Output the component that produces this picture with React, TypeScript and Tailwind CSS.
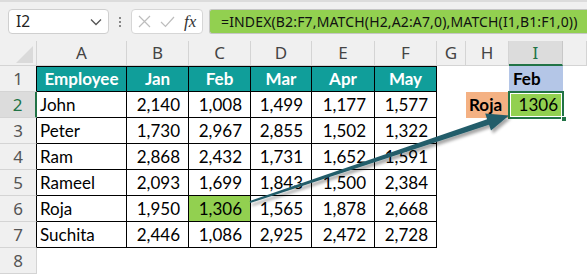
import React from "react";

const cellFont = { fontFamily: "Lato, 'Open Sans', sans-serif" };
const uiFont = { fontFamily: "'Noto Sans', 'Open Sans', sans-serif" };

const cols = ["A", "B", "C", "D", "E", "F", "G", "H", "I", ""];

const rows: [string, string, string, string, string, string][] = [
  ["John", "2,140", "1,008", "1,499", "1,177", "1,577"],
  ["Peter", "1,730", "2,967", "2,855", "1,502", "1,322"],
  ["Ram", "2,868", "2,432", "1,731", "1,652", "1,591"],
  ["Rameel", "2,093", "1,699", "1,843", "1,500", "2,384"],
  ["Roja", "1,950", "1,306", "1,565", "1,878", "2,668"],
  ["Suchita", "2,446", "1,086", "2,925", "2,472", "2,728"],
];

function ChevronDown() {
  return (
    <svg width="12" height="8" viewBox="0 0 12 8" fill="none">
      <path d="M1 1.5 L6 6.5 L11 1.5" stroke="#555" strokeWidth="1.3" />
    </svg>
  );
}

function Toolbar() {
  return (
    <div className="flex h-[41px] items-start bg-[#f0f0f0] border-t-2 border-[#dcdcdc] pt-[7px] pl-[8px]">
      <div
        className="flex h-[25px] w-[101px] items-center justify-between rounded-[4px] border border-[#cfcfcf] bg-white pl-[7px] pr-[6px] text-[15.5px] text-[#222]"
        style={uiFont}
      >
        <span>I2</span>
        <ChevronDown />
      </div>
      <div className="flex h-[25px] w-[22px] flex-col items-center justify-center gap-[2px]">
        <span className="h-[2px] w-[2px] bg-[#888]" />
        <span className="h-[2px] w-[2px] bg-[#888]" />
        <span className="h-[2px] w-[2px] bg-[#888]" />
      </div>
      <div className="flex h-[25px] w-[72px] items-center gap-[9px] rounded-[4px] border border-[#d6d6d6] bg-white pl-[6px]">
        <svg width="13" height="13" viewBox="0 0 13 13">
          <path d="M1 1 L12 12 M12 1 L1 12" stroke="#bdbdbd" strokeWidth="1.2" />
        </svg>
        <svg width="15" height="12" viewBox="0 0 15 12">
          <path d="M1 6 L5.5 10.5 L14 1" stroke="#bdbdbd" strokeWidth="1.2" fill="none" />
        </svg>
        <span
          className="text-[17px] italic leading-none text-[#333]"
          style={{ fontFamily: "'Liberation Serif', 'DejaVu Serif', serif" }}
        >
          fx
        </span>
      </div>
      <div
        className="ml-[6px] flex h-[25px] flex-1 items-center rounded-l-[3px] border border-[#c6c6c6] border-r-0 bg-[#92d050] pl-[11px] text-[14px] tracking-[0.15px] text-[#111]"
        style={uiFont}
      >
        =INDEX(B2:F7,MATCH(H2,A2:A7,0),MATCH(I1,B1:F1,0))
      </div>
    </div>
  );
}

function Arrow() {
  return (
    <svg
      className="pointer-events-none absolute left-0 top-0"
      width="587"
      height="275"
      viewBox="0 0 587 275"
    >
      <defs>
        <filter id="sh" x="-20%" y="-20%" width="140%" height="140%">
          <feDropShadow dx="2" dy="3" stdDeviation="1.6" floodColor="#000" floodOpacity="0.35" />
        </filter>
      </defs>
      <polygon
        points="249.7,201.1 487.1,119.2 485.2,113.5 509,115.5 491,130.5 489,124.8 250.3,202.9"
        fill="#245d6a"
        filter="url(#sh)"
      />
    </svg>
  );
}

export default function App() {
  const hdr = "flex items-center justify-center border-r border-b border-[#d4d4d4] bg-[#f0f0f0] text-[17px] text-[#444]";
  const rowHdr = "flex items-center justify-center border-b border-[#d4d4d4] bg-[#f0f0f0] text-[17px] text-[#555]";
  const tcell = "flex items-center border-r border-b border-black text-[17px] text-black";

  return (
    <div className="relative h-[275px] w-[587px] overflow-hidden bg-white">
      <Toolbar />
      <div className="grid grid-cols-[37px_90px_62px_62px_61px_63px_62px_29px_43px_54px_1fr] grid-rows-[25px_repeat(8,26px)]">
        <div className="relative border-r border-b border-[#d4d4d4] bg-[#f0f0f0]">
          <svg className="absolute left-[16px] top-[5px]" width="17" height="17" viewBox="0 0 17 17">
            <polygon points="17,0 17,17 0,17" fill="#dadada" />
          </svg>
        </div>
        {cols.map((c, i) => (
          <div
            key={i}
            className={
              c === "I"
                ? "flex items-center justify-center border-r border-b-2 border-r-[#c8c8c8] border-b-[#217346] bg-[#dcdcdc] text-[17px] text-[#217346]"
                : hdr
            }
            style={uiFont}
          >
            {c}
          </div>
        ))}

        <div className={rowHdr + " border-r border-r-black"} style={uiFont}>1</div>
        {["Employee", "Jan", "Feb", "Mar", "Apr", "May"].map((h) => (
          <div
            key={h}
            className="flex items-center justify-center border-r border-b border-t border-black bg-[#109e9a] text-[17px] font-bold text-white"
            style={cellFont}
          >
            {h}
          </div>
        ))}
        <div />
        <div />
        <div
          className="flex items-center bg-[#b4c6e7] pl-[4px] text-[17px] font-bold text-black"
          style={cellFont}
        >
          Feb
        </div>
        <div />

        {rows.map((r, ri) => {
          const rowNum = ri + 2;
          return (
            <React.Fragment key={ri}>
              <div
                className={
                  rowNum === 2
                    ? "flex items-center justify-center border-b border-r-2 border-b-[#d4d4d4] border-r-[#217346] bg-[#dcdcdc] text-[17px] text-[#217346]"
                    : rowHdr + " border-r border-r-black"
                }
                style={uiFont}
              >
                {rowNum}
              </div>
              <div className={tcell + " pl-[3px]"} style={cellFont}>
                {r[0]}
              </div>
              {r.slice(1).map((v, vi) => (
                <div
                  key={vi}
                  className={
                    tcell +
                    " justify-end pr-[8px]" +
                    (rowNum === 6 && vi === 1 ? " bg-[#92d050]" : "")
                  }
                  style={cellFont}
                >
                  {v}
                </div>
              ))}
              <div />
              {rowNum === 2 ? (
                <>
                  <div
                    className="flex items-center bg-[#f4b183] pl-[3px] text-[17px] font-bold text-black"
                    style={cellFont}
                  >
                    Roja
                  </div>
                  <div
                    className="relative flex items-center justify-end bg-[#92d050] pr-[5px] text-[17px] text-black"
                    style={cellFont}
                  >
                    1306
                    <span className="pointer-events-none absolute inset-[-1px] border-2 border-[#217346]" />
                    <span className="pointer-events-none absolute inset-[1px] border border-white" />
                    <span className="absolute bottom-[-4px] right-[-4px] h-[6px] w-[6px] border border-white bg-[#217346]" />
                  </div>
                </>
              ) : (
                <>
                  <div />
                  <div />
                </>
              )}
              <div />
            </React.Fragment>
          );
        })}

        <div className={rowHdr + " border-r border-r-[#d4d4d4]"} style={uiFont}>8</div>
      </div>
      <Arrow />
    </div>
  );
}
